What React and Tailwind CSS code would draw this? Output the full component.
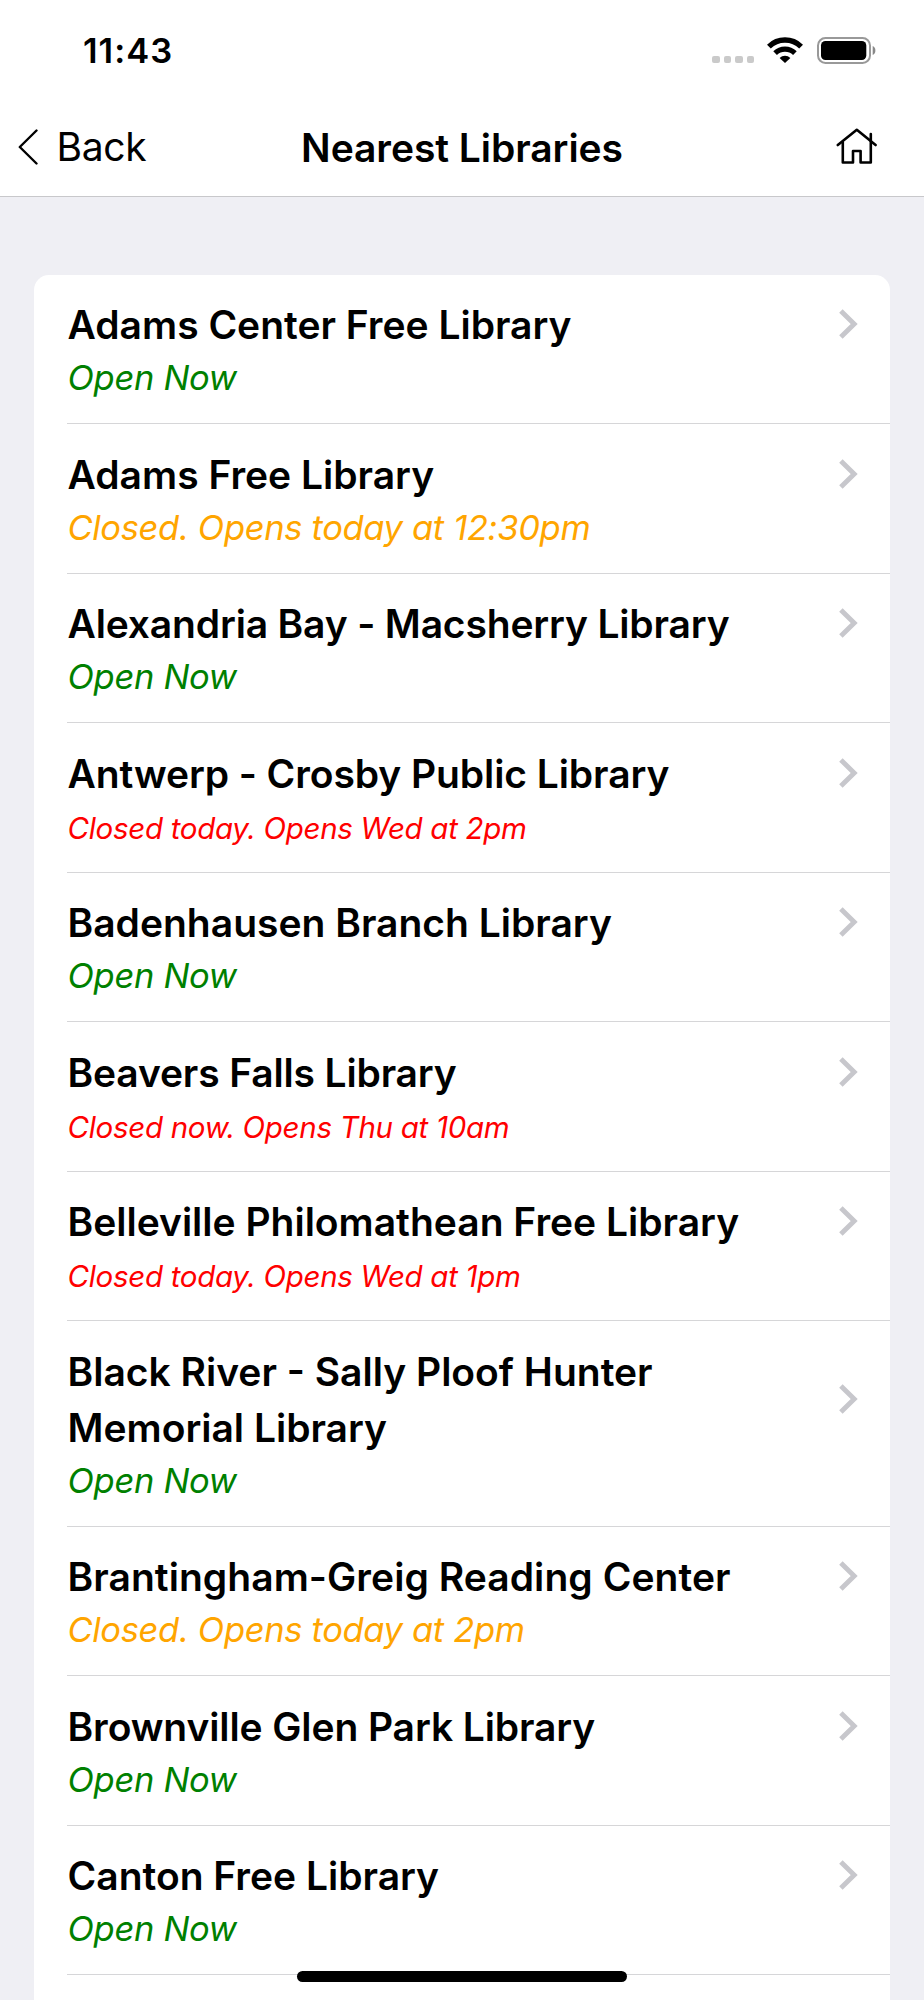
const statusStyles = {
    open: 'text-[34.5px] leading-[50.5px] tracking-[-0.32px] text-[#008000]',
    later: 'text-[34.5px] leading-[50.5px] tracking-[-0.34px] text-[#ffa500]',
    closed: 'text-[29.5px] leading-[53.5px] tracking-[-0.3px] text-[#ff0000]'
};

const libraries = [
    { name: 'Adams Center Free Library', status: 'open', text: 'Open Now' },
    { name: 'Adams Free Library', status: 'later', text: 'Closed. Opens today at 12:30pm' },
    { name: 'Alexandria Bay - Macsherry Library', status: 'open', text: 'Open Now', tracking: 'tracking-[-0.16px]' },
    { name: 'Antwerp - Crosby Public Library', status: 'closed', text: 'Closed today. Opens Wed at 2pm', tracking: 'tracking-[-0.08px]' },
    { name: 'Badenhausen Branch Library', status: 'open', text: 'Open Now' },
    { name: 'Beavers Falls Library', status: 'closed', text: 'Closed now. Opens Thu at 10am', tracking: 'tracking-[-0.15px]' },
    { name: 'Belleville Philomathean Free Library', status: 'closed', text: 'Closed today. Opens Wed at 1pm' },
    { name: 'Black River - Sally Ploof Hunter Memorial Library', status: 'open', text: 'Open Now' },
    { name: 'Brantingham-Greig Reading Center', status: 'later', text: 'Closed. Opens today at 2pm', tracking: 'tracking-[0.06px]' },
    { name: 'Brownville Glen Park Library', status: 'open', text: 'Open Now', tracking: 'tracking-[-0.1px]' },
    { name: 'Canton Free Library', status: 'open', text: 'Open Now' }
];

const StatusBar = () => (
    <div className="flex h-[100px] items-center justify-between pl-[83px] pr-[47px]">
        <span className="pt-[2px] text-[34.5px] leading-[40px] font-semibold tracking-[1px]">11:43</span>
        <div className="flex items-center">
            <div className="mr-[13px] flex gap-[4.2px] pt-[19px]">
                {[0, 1, 2, 3].map(i => (
                    <span key={i} className="h-[7.3px] w-[7.3px] rounded-[2px] bg-[#cacaca]" />
                ))}
            </div>
            <svg className="mr-[14px] h-[26px] w-[36px]" viewBox="0 0 36 26" fill="none" stroke="#000">
                <path d="M1.9 9.6 A23 23 0 0 1 34.1 9.6" strokeWidth="5.4" />
                <path d="M8.1 16.2 A14.2 14.2 0 0 1 27.9 16.2" strokeWidth="5.2" />
                <path d="M18 26 L12.6 20.9 A8 8 0 0 1 23.4 20.9 Z" fill="#000" stroke="none" />
            </svg>
            <svg className="h-[27px] w-[60px]" viewBox="0 0 60 27">
                <rect x="1" y="1" width="52" height="25" rx="7.5" fill="none" stroke="#999" strokeWidth="2" />
                <rect x="4" y="4" width="45.3" height="19" rx="4.5" fill="#000" />
                <path d="M55.7 9 C59.3 10.5 59.3 16.5 55.7 18 Z" fill="#888" />
            </svg>
        </div>
    </div>
);

const NavBar = () => (
    <div className="grid h-[96px] grid-cols-[1fr_auto_1fr] items-center px-[18px]">
        <button className="flex items-center pb-[2px]">
            <svg className="mr-[18.5px] h-[36px] w-[20px]" viewBox="0 0 20 36" fill="none" stroke="#000" strokeWidth="2.4">
                <path d="M18.5 1.5 L1.8 18 L18.5 34.5" strokeLinecap="round" strokeLinejoin="round" />
            </svg>
            <span className="text-[39px] leading-[48px] tracking-[-0.3px]">Back</span>
        </button>
        <h1 className="text-[39px] leading-[48px] font-semibold tracking-[-0.06px]">Nearest Libraries</h1>
        <button className="mr-[29px] justify-self-end pb-[4px]">
            <svg className="h-[36px] w-[41px]" viewBox="0 0 41 36" fill="none" stroke="#000" strokeWidth="2.6">
                <path d="M1.8 17 L20.8 1.8 L39.6 17" strokeLinecap="round" strokeLinejoin="round" />
                <path d="M6.8 14 V34.5 H17 V23 H24.6 V34.5 H34.8 V6" strokeLinecap="round" strokeLinejoin="round" />
            </svg>
        </button>
    </div>
);

const LibraryRow = ({ library }) => (
    <li className="border-b border-[#d6d6d8] pt-[22.5px] pb-[20px]">
        <div className="flex items-center justify-between pr-[32px]">
            <h2 className={`w-[700px] pl-[0.5px] text-[39px] leading-[56px] font-semibold ${library.tracking || ''}`}>{library.name}</h2>
            <svg className="mb-[2px] h-[30px] w-[19px]" viewBox="0 0 19 30" fill="none" stroke="#c7c7cc" strokeWidth="4.9">
                <path d="M1.9 1.9 L15.2 15 L1.9 28.1" />
            </svg>
        </div>
        <p className={`h-[50px] pl-[0.5px] italic whitespace-nowrap ${statusStyles[library.status]}`}>{library.text}</p>
    </li>
);

export default function App() {
    return (
        <div className="relative h-[2000px] w-[924px] overflow-hidden bg-[#efeff4] font-['Inter',sans-serif] text-black">
            <header className="border-b border-[#c8c8cb] bg-white">
                <StatusBar />
                <NavBar />
            </header>
            <main className="px-[34px] pt-[77.5px]">
                <ul className="h-[1800px] rounded-t-[15px] bg-white pl-[33px]">
                    {libraries.map(library => (
                        <LibraryRow key={library.name} library={library} />
                    ))}
                </ul>
            </main>
            <div className="absolute top-[1971px] left-[297px] h-[11px] w-[330px] rounded-full bg-black" />
        </div>
    );
}
